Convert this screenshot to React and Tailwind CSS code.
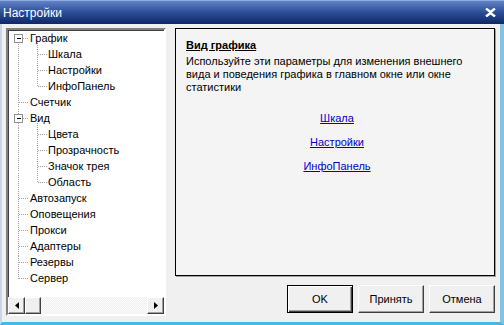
import React from 'react';

const tree = [
  { label: 'График', level: 0, box: true },
  { label: 'Шкала', level: 1 },
  { label: 'Настройки', level: 1 },
  { label: 'ИнфоПанель', level: 1 },
  { label: 'Счетчик', level: 0 },
  { label: 'Вид', level: 0, box: true },
  { label: 'Цвета', level: 1 },
  { label: 'Прозрачность', level: 1 },
  { label: 'Значок трея', level: 1 },
  { label: 'Область', level: 1 },
  { label: 'Автозапуск', level: 0 },
  { label: 'Оповещения', level: 0 },
  { label: 'Прокси', level: 0 },
  { label: 'Адаптеры', level: 0 },
  { label: 'Резервы', level: 0 },
  { label: 'Сервер', level: 0 },
];

// dotted connector lines of the tree, drawn behind the labels
function TreeLines() {
  const cy = (i) => 8 + i * 16 + 0.5;
  const dot = { stroke: '#a0a0a0', strokeWidth: 1, strokeDasharray: '1 1', shapeRendering: 'crispEdges' };
  return (
    <svg className="absolute left-0 top-0" width="156" height="270">
      <line x1="10.5" y1={cy(0) + 5} x2="10.5" y2={cy(15)} {...dot} />
      <line x1="29.5" y1={cy(0) + 2} x2="29.5" y2={cy(3)} {...dot} />
      <line x1="29.5" y1={cy(5) + 2} x2="29.5" y2={cy(9)} {...dot} />
      {tree.map((t, i) =>
        t.level === 0 ? (
          <line key={i} x1={t.box ? 15 : 11} y1={cy(i)} x2="21" y2={cy(i)} {...dot} />
        ) : (
          <line key={i} x1="30" y1={cy(i)} x2="39" y2={cy(i)} {...dot} />
        )
      )}
      {[0, 5].map((i) => (
        <g key={i} shapeRendering="crispEdges">
          <rect x="6.5" y={cy(i) - 4.5} width="8" height="8" fill="#fff" stroke="#919191" />
          <line x1="8.5" y1={cy(i) - 0.5} x2="13" y2={cy(i) - 0.5} stroke="#000" />
        </g>
      ))}
    </svg>
  );
}

function ScrollArrow({ dir }) {
  return (
    <div className="w-[17px] h-[17px] bg-[#f0f0f0] border border-t-white border-l-white border-r-[#404040] border-b-[#404040] shadow-[inset_-1px_-1px_0_#a0a0a0] flex items-center justify-center">
      <svg width="4" height="7" viewBox="0 0 4 7">
        {dir === 'left' ? <path d="M4 0 L4 7 L0 3.5 Z" fill="#000" /> : <path d="M0 0 L0 7 L4 3.5 Z" fill="#000" />}
      </svg>
    </div>
  );
}

function Btn({ children, main }) {
  return (
    <button
      type="button"
      className={
        'w-[66px] h-[28px] bg-[#f0f0f0] text-[11px] text-black ' +
        (main
          ? 'border border-black shadow-[inset_1px_1px_0_#fff,inset_-1px_-1px_0_#404040,inset_-2px_-2px_0_#a0a0a0]'
          : 'border border-t-white border-l-white border-r-[#404040] border-b-[#404040] shadow-[inset_-1px_-1px_0_#a0a0a0]')
      }
    >
      {children}
    </button>
  );
}

export default function App() {
  return (
    <div className="w-[504px] h-[325px] flex flex-col bg-[#f0f0f0] font-['Liberation_Sans',Arial,sans-serif] text-[11px] text-black select-none">
      <div className="h-[24px] shrink-0 flex items-center justify-between pl-[3px] pr-[8px] bg-gradient-to-b from-[#6282c6] via-[#2d4d97] to-[#0c2867] border-t border-[#8fa9e2]">
        <span className="text-white text-[12px]">Настройки</span>
        <svg width="11" height="9" viewBox="0 0 11 9">
          <path d="M1 0.5 L5.5 4 L10 0.5 M1 8.5 L5.5 5 L10 8.5" stroke="#fff" strokeWidth="2.4" fill="none" />
        </svg>
      </div>

      <div className="flex-1 flex gap-[9px] pl-[4px] pr-[5px] pt-[4px] border-l-2 border-r-4 border-l-[#c9d6ea] border-r-[#7fc4e4] border-b-[3px] border-b-[#45b8e3]">
        <div className="w-[160px] h-[288px] flex flex-col border-2 border-t-[#808080] border-l-[#808080] border-r-white border-b-white shadow-[inset_1px_1px_0_#404040] bg-white">
          <div className="relative flex-1">
            <TreeLines />
            <div className="relative">
              {tree.map((t, i) => (
                <div
                  key={i}
                  className={'h-[16px] leading-[16px] whitespace-nowrap ' + (t.level === 0 ? 'pl-[22px]' : 'pl-[40px]')}
                >
                  {t.label}
                </div>
              ))}
            </div>
          </div>
          <div className="h-[17px] flex bg-[repeating-conic-gradient(#ffffff_0%_25%,#ececec_0%_50%)] bg-[length:2px_2px]">
            <ScrollArrow dir="left" />
            <div className="w-[16px] h-[17px] bg-[#f0f0f0] border border-t-white border-l-white border-r-[#404040] border-b-[#404040] shadow-[inset_-1px_-1px_0_#a0a0a0]" />
            <div className="flex-1" />
            <ScrollArrow dir="right" />
          </div>
        </div>

        <div className="flex-1 flex flex-col">
          <div className="h-[248px] border border-black shadow-[1px_1px_0_#a0a0a0] bg-[#f4f4f4] pl-[10px] pr-[6px] pt-[10px]">
            <div className="font-bold underline leading-[13px]">Вид графика</div>
            <p className="mt-[3px] leading-[13px] whitespace-nowrap">
              Используйте эти параметры для изменения внешнего
              <br />
              вида и поведения графика в главном окне или окне
              <br />
              статистики
            </p>
            <div className="mt-[18px] flex flex-col items-center gap-[11px] text-[#0000cc] underline leading-[13px]">
              <span>Шкала</span>
              <span>Настройки</span>
              <span>ИнфоПанель</span>
            </div>
          </div>
          <div className="mt-[9px] flex justify-end gap-[5px]">
            <Btn main>OK</Btn>
            <Btn>Принять</Btn>
            <Btn>Отмена</Btn>
          </div>
        </div>
      </div>
    </div>
  );
}
